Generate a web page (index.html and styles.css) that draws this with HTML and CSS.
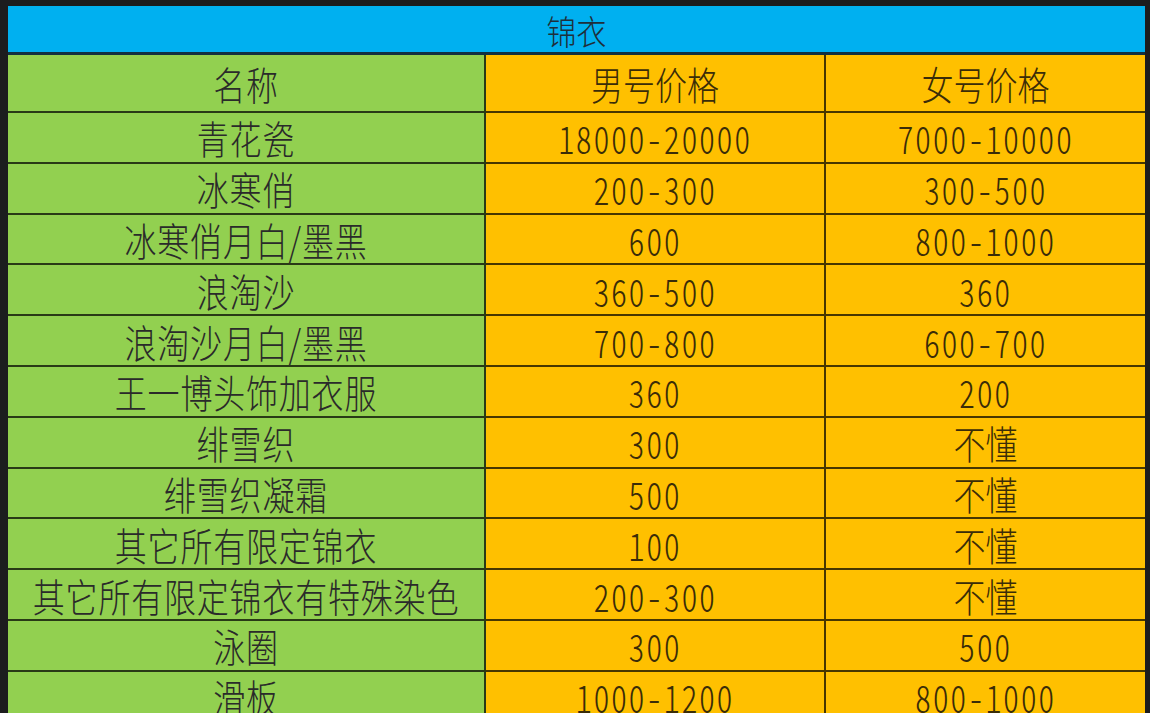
FILE: index.html
```html
<!DOCTYPE html>
<html lang="zh">
<head>
<meta charset="utf-8">
<title>锦衣</title>
<link rel="stylesheet" href="styles.css">
</head>
<body>
<div class="sheet">
  <div class="title"><span class="t">锦衣</span></div>
  <div class="grid">
    <div class="cell head name"><span class="t">名称</span></div>
    <div class="cell head price"><span class="t">男号价格</span></div>
    <div class="cell head price last"><span class="t">女号价格</span></div>

    <div class="cell name"><span class="t">青花瓷</span></div>
    <div class="cell price"><span class="t num">18000-20000</span></div>
    <div class="cell price last"><span class="t num">7000-10000</span></div>

    <div class="cell name"><span class="t">冰寒俏</span></div>
    <div class="cell price"><span class="t num">200-300</span></div>
    <div class="cell price last"><span class="t num">300-500</span></div>

    <div class="cell name"><span class="t">冰寒俏月白/墨黑</span></div>
    <div class="cell price"><span class="t num">600</span></div>
    <div class="cell price last"><span class="t num">800-1000</span></div>

    <div class="cell name"><span class="t">浪淘沙</span></div>
    <div class="cell price"><span class="t num">360-500</span></div>
    <div class="cell price last"><span class="t num">360</span></div>

    <div class="cell name"><span class="t">浪淘沙月白/墨黑</span></div>
    <div class="cell price"><span class="t num">700-800</span></div>
    <div class="cell price last"><span class="t num">600-700</span></div>

    <div class="cell name"><span class="t">王一博头饰加衣服</span></div>
    <div class="cell price"><span class="t num">360</span></div>
    <div class="cell price last"><span class="t num">200</span></div>

    <div class="cell name"><span class="t">绯雪织</span></div>
    <div class="cell price"><span class="t num">300</span></div>
    <div class="cell price last"><span class="t">不懂</span></div>

    <div class="cell name"><span class="t">绯雪织凝霜</span></div>
    <div class="cell price"><span class="t num">500</span></div>
    <div class="cell price last"><span class="t">不懂</span></div>

    <div class="cell name"><span class="t">其它所有限定锦衣</span></div>
    <div class="cell price"><span class="t num">100</span></div>
    <div class="cell price last"><span class="t">不懂</span></div>

    <div class="cell name"><span class="t">其它所有限定锦衣有特殊染色</span></div>
    <div class="cell price"><span class="t num">200-300</span></div>
    <div class="cell price last"><span class="t">不懂</span></div>

    <div class="cell name"><span class="t">泳圈</span></div>
    <div class="cell price"><span class="t num">300</span></div>
    <div class="cell price last"><span class="t num">500</span></div>

    <div class="cell name"><span class="t">滑板</span></div>
    <div class="cell price"><span class="t num">1000-1200</span></div>
    <div class="cell price last"><span class="t num">800-1000</span></div>
  </div>
</div>
</body>
</html>
```
FILE: styles.css
```css
html, body {
  margin: 0;
  padding: 0;
  background: #1c1c1e;
  height: 713px;
  overflow: hidden;
}

.sheet {
  padding: 6px 5px 0 8px;
  font-family: "Noto Sans CJK SC", "Noto Sans", sans-serif;
  font-weight: 300;
  color: #2a2a2a;
}

.title {
  height: 46px;
  background: #00b0f0;
  border-bottom: 3px solid #123040;
  display: flex;
  justify-content: center;
  align-items: flex-end;
  font-size: 30px;
  line-height: 38px;
  overflow: hidden;
}

.title .t {
  display: inline-block;
  transform: scaleY(1.15);
  transform-origin: center bottom;
  color: #1f2f3a;
}

.grid {
  display: grid;
  grid-template-columns: 478px 340px 1fr;
  grid-template-rows: 58px;
  grid-auto-rows: 50.8px;
}

.cell {
  box-sizing: border-box;
  display: flex;
  align-items: center;
  justify-content: center;
  border-bottom: 2px solid rgba(0, 0, 0, 0.72);
  border-right: 2px solid rgba(0, 0, 0, 0.72);
  font-size: 32px;
  line-height: 1;
  white-space: nowrap;
}

.cell.last {
  border-right: none;
}

.name {
  background: #92d050;
  letter-spacing: 0.8px;
}

.price {
  background: #ffc000;
  color: #3a2c08;
}

.cell .t {
  display: inline-block;
  transform: scaleY(1.2);
}

.cell .num {
  font-feature-settings: "hwid" 1;
  letter-spacing: 1.6px;
}
```
